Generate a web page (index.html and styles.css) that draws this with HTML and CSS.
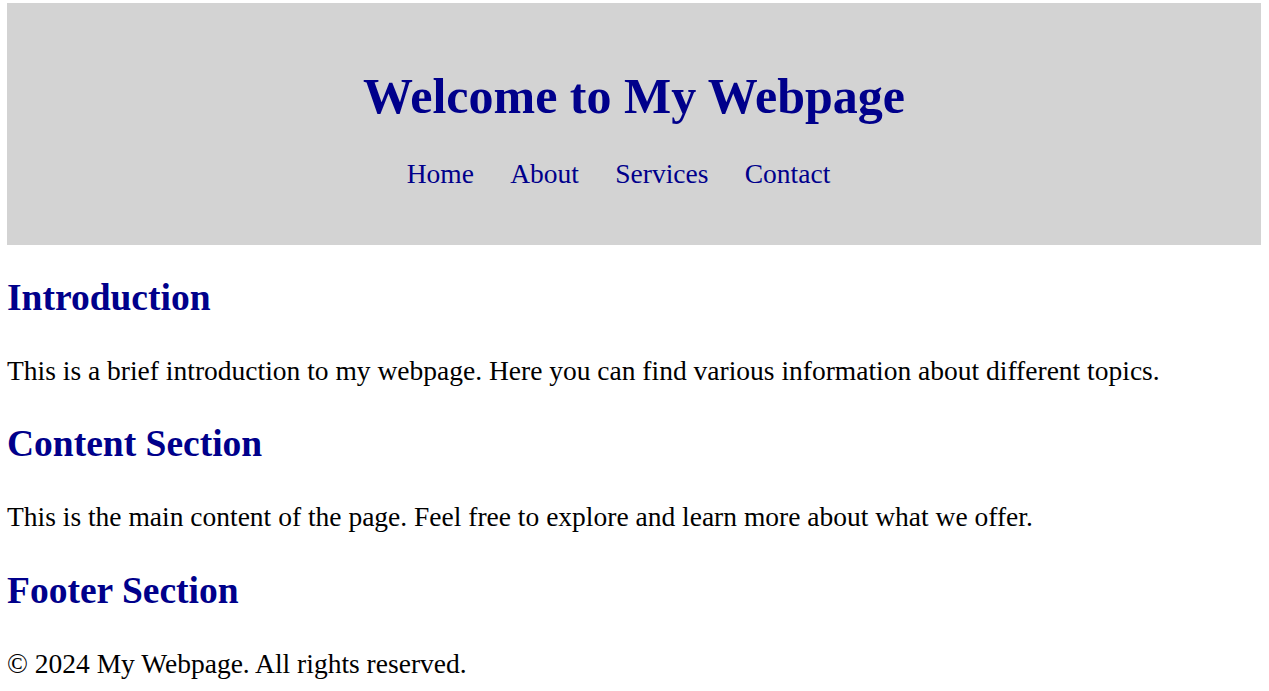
FILE: index.html
```html
<!DOCTYPE html>
<html lang="en">
<head>
<meta charset="utf-8">
<title>My Webpage</title>
<link rel="stylesheet" href="styles.css">
</head>
<body>
<header class="site-header">
  <h1 class="site-title">Welcome to My Webpage</h1>
  <nav class="site-nav">
    <a href="#" class="nav-link">Home</a>
    <a href="#" class="nav-link">About</a>
    <a href="#" class="nav-link">Services</a>
    <a href="#" class="nav-link">Contact</a>
  </nav>
</header>
<section class="section">
  <h2 class="section-title">Introduction</h2>
  <p class="section-text">This is a brief introduction to my webpage. Here you can find various information about different topics.</p>
</section>
<section class="section">
  <h2 class="section-title">Content Section</h2>
  <p class="section-text">This is the main content of the page. Feel free to explore and learn more about what we offer.</p>
</section>
<footer class="section">
  <h2 class="section-title">Footer Section</h2>
  <p class="section-text">&copy; 2024 My Webpage. All rights reserved.</p>
</footer>
</body>
</html>
```

FILE: styles.css
```css
html, body {
  margin: 0;
  padding: 0;
}
body {
  padding: 3px 8px 0 7px;
  font-family: "Liberation Serif", "Times New Roman", serif;
  font-size: 27.5px;
  color: #000;
  background: #fff;
}
.site-header {
  background: #d3d3d3;
  text-align: center;
  padding: 64px 0 54.5px;
}
.site-title {
  margin: 0;
  font-size: 50px;
  font-weight: bold;
  color: #00008b;
}
.site-nav {
  margin-top: 33px;
  display: flex;
  justify-content: center;
  gap: 36.3px;
  padding-right: 31px;
}
.nav-link {
  color: #00008b;
  text-decoration: none;
}
.section-title {
  font-size: 37.5px;
  color: #00008b;
  margin: 31px 0 36px;
}
.section-text {
  margin: 0 0 35.5px;
}
```
